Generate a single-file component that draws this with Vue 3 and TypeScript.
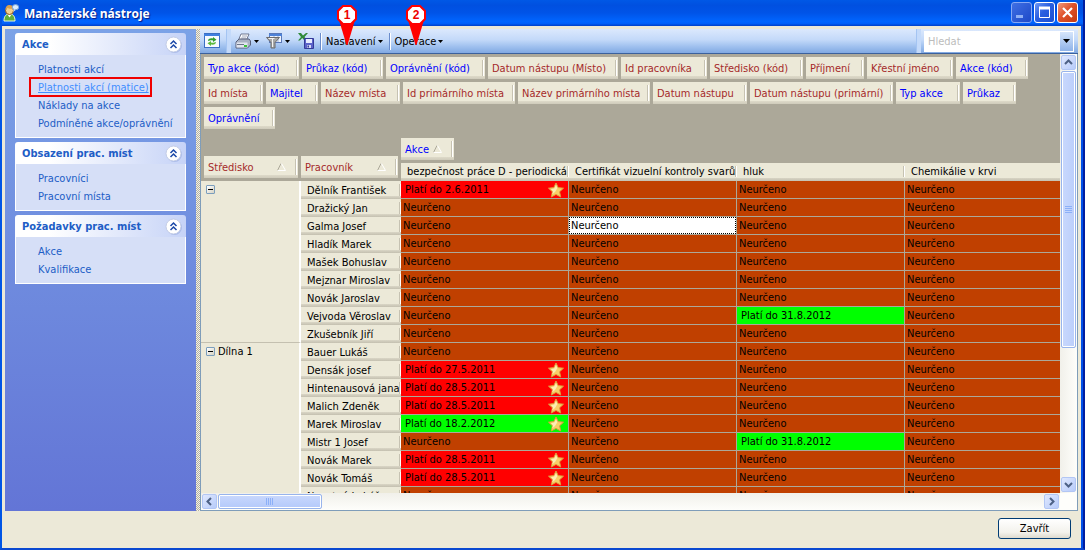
<script setup lang="ts">
import { ref } from 'vue'

interface Panel { title: string; links: string[] }
interface Field { label: string; width: number; data?: boolean }
interface Cell { text: string; kind: 'none' | 'bad' | 'ok'; star: boolean }
interface Person { name: string; cells: Cell[] }
interface Group { label: string; people: Person[] }

const panels: Panel[] = [
  { title: 'Akce', links: ['Platnosti akcí', 'Platnosti akcí (matice)', 'Náklady na akce', 'Podmíněné akce/oprávnění'] },
  { title: 'Obsazení prac. míst', links: ['Pracovníci', 'Pracovní místa'] },
  { title: 'Požadavky prac. míst', links: ['Akce', 'Kvalifikace'] },
]
const activeLink = ref('Platnosti akcí (matice)')

const fields: Field[] = [
  { label: 'Typ akce (kód)', width: 95, data: true },
  { label: 'Průkaz (kód)', width: 81, data: true },
  { label: 'Oprávnění (kód)', width: 99, data: true },
  { label: 'Datum nástupu (Místo)', width: 130 },
  { label: 'Id pracovníka', width: 86 },
  { label: 'Středisko (kód)', width: 93 },
  { label: 'Příjmení', width: 58 },
  { label: 'Křestní jméno', width: 86 },
  { label: 'Akce (kód)', width: 72, data: true },
  { label: 'Id místa', width: 59 },
  { label: 'Majitel', width: 52, data: true },
  { label: 'Název místa', width: 79 },
  { label: 'Id primárního místa', width: 112 },
  { label: 'Název primárního místa', width: 132 },
  { label: 'Datum nástupu', width: 94 },
  { label: 'Datum nástupu (primární)', width: 143 },
  { label: 'Typ akce', width: 64, data: true },
  { label: 'Průkaz', width: 53, data: true },
  { label: 'Oprávnění', width: 71, data: true },
]

const columns = ['bezpečnost práce D - periodická', 'Certifikát vizuelní kontroly svarů', 'hluk', 'Chemikálie v krvi']

const none = (): Cell => ({ text: 'Neurčeno', kind: 'none', star: false })
const until = (date: string, kind: 'bad' | 'ok', star: boolean): Cell => ({ text: `Platí do ${date}`, kind, star })
const person = (name: string, first?: Cell, third?: Cell): Person => ({
  name,
  cells: [first ?? none(), none(), third ?? none(), none()],
})

const groups: Group[] = [
  {
    label: '',
    people: [
      person('Dělník František', until('2.6.2011', 'bad', true)),
      person('Dražický Jan'),
      person('Galma Josef'),
      person('Hladík Marek'),
      person('Mašek Bohuslav'),
      person('Mejznar Miroslav'),
      person('Novák Jaroslav'),
      person('Vejvoda Věroslav', undefined, until('31.8.2012', 'ok', false)),
      person('Zkušebník Jiří'),
    ],
  },
  {
    label: 'Dílna 1',
    people: [
      person('Bauer Lukáš'),
      person('Densák josef', until('27.5.2011', 'bad', true)),
      person('Hintenausová jana', until('28.5.2011', 'bad', true)),
      person('Malich Zdeněk', until('28.5.2011', 'bad', true)),
      person('Marek Miroslav', until('18.2.2012', 'ok', true)),
      person('Mistr 1 Josef', undefined, until('31.8.2012', 'ok', false)),
      person('Novák Marek', until('28.5.2011', 'bad', true)),
      person('Novák Tomáš', until('28.5.2011', 'bad', true)),
      person('Novotný Lukáš'),
    ],
  },
]

const selected = ref('Galma Josef/1')
const search = ref('')
</script>

<template>
  <div class="window">
    <header class="titlebar">
      <svg class="app-icon" viewBox="0 0 16 18" width="16" height="18" aria-hidden="true">
        <path d="M1 17c0-5 2-7 5.500-7s5.500 2 5.500 7z" fill="#5fae3a" stroke="#e8f5d8" />
        <path d="M4.500 10.500l2 3 2-3z" fill="#fff" />
        <circle cx="6.500" cy="6.500" r="4" fill="#f3cf8e" stroke="#8a5a1c" />
        <path d="M2.500 6c0-4 2-5 4-5s4 1 4 3.500c-3 .5-5 0-6-.5z" fill="#d9a050" />
        <ellipse cx="12.500" cy="3.200" rx="3.200" ry="2.600" fill="#d9ecff" stroke="#6f9fd6" />
        <path d="M11 5l-1 3 2.500-2z" fill="#d9ecff" />
      </svg>
      <h1>Manažerské nástroje</h1>
      <div class="window-buttons">
        <button class="wb dim" aria-label="Minimalizovat">
          <svg viewBox="0 0 19 19" width="19" height="19"><rect x="4" y="12" width="7" height="3" fill="#8fb0f5" /></svg>
        </button>
        <button class="wb" aria-label="Maximalizovat">
          <svg viewBox="0 0 19 19" width="19" height="19"><path d="M4.500 4.500h10v10h-10z" fill="none" stroke="#fff" /><path d="M4 5h11" stroke="#fff" stroke-width="3" /></svg>
        </button>
        <button class="wb close" aria-label="Zavřít okno">
          <svg viewBox="0 0 19 19" width="19" height="19"><path d="M5 5l9 9M14 5l-9 9" stroke="#fff" stroke-width="2.200" /></svg>
        </button>
      </div>
    </header>

    <div class="body">
      <nav class="sidebar">
        <section v-for="p in panels" :key="p.title" class="panel">
          <h2>
            <span>{{ p.title }}</span>
            <button class="collapse" :aria-label="`Sbalit ${p.title}`">
              <svg viewBox="0 0 17 17" width="17" height="17">
                <circle cx="9.500" cy="9.500" r="7.500" fill="#a9bbea" />
                <circle cx="8.500" cy="8.500" r="7.500" fill="#fff" stroke="#c3cce6" />
                <path d="M5.500 8l3-3 3 3M5.500 12l3-3 3 3" fill="none" stroke="#1a48a8" stroke-width="1.500" />
              </svg>
            </button>
          </h2>
          <ul>
            <li v-for="l in p.links" :key="l">
              <a href="#" :class="{ active: l === activeLink }" @click.prevent="activeLink = l">{{ l }}</a>
            </li>
          </ul>
        </section>
      </nav>
      <div class="splitter"></div>

      <main class="main">
        <div class="toolbar">
          <button class="tool refresh" aria-label="Obnovit">
            <svg viewBox="0 0 16 16" width="16" height="16">
              <rect x="0.500" y="0.500" width="15" height="14" fill="#f6faff" stroke="#3b6fc4" />
              <path d="M0 1h16v2H0z" fill="#3f7fe0" />
              <path d="M4 8c0-2 2-3 5-2.500V4l3.500 2.700L9 9V7.500C7 7 6 7.500 4 8z" fill="#2f9e2f" />
              <path d="M12 9c0 2-2 3-5 2.500V13l-3.500-2.700L7 8v1.500c2 .5 3 0 5-.5z" fill="#5cba3c" />
            </svg>
          </button>
          <span class="grip"></span>
          <button class="tool print" aria-label="Tisk">
            <svg viewBox="0 0 16 16" width="16" height="16">
              <path d="M6 1h8l-2.500 6H3.500z" fill="#fff" stroke="#6d7690" />
              <path d="M7 3h5M6.200 5h5" stroke="#a0a8bc" />
              <path d="M1 9l3-3h10l1.500 2v4l-3 3H1z" fill="#aab2c4" stroke="#565f78" />
              <path d="M1.500 9.500h11v5h-11z" fill="#e2e6ef" />
              <path d="M2 11.500h7" stroke="#6b748a" /><path d="M9 12h3v2H9z" fill="#3cc43c" />
            </svg>
            <svg class="caret" viewBox="0 0 5 3" width="5" height="3"><path d="M0 0h5L2.500 3z" /></svg>
          </button>
          <button class="tool filter" aria-label="Filtr">
            <svg viewBox="0 0 16 16" width="16" height="16">
              <rect x="3.500" y="0.500" width="12" height="9" fill="#eef4ff" stroke="#5a78b8" />
              <path d="M3 1h13v2H3z" fill="#4d82d8" /><path d="M8 3v6M12 3v6" stroke="#9fb3d8" />
              <path d="M0.500 4.500h13L9 9.500V15H5V9.500z" fill="#a8a8a8" stroke="#6c6c6c" />
              <path d="M6.500 6v8M2.500 5.500h6" stroke="#f4f4f4" />
            </svg>
            <svg class="caret" viewBox="0 0 5 3" width="5" height="3"><path d="M0 0h5L2.500 3z" /></svg>
          </button>
          <button class="tool excel" aria-label="Uložit do Excelu">
            <svg viewBox="0 0 16 16" width="16" height="16">
              <path d="M0 0h3l2 2.500L8 0h2L6.500 4 9 7H6L4.200 5 2 7.500H0L3 4z" fill="#2f8a3a" />
              <path d="M6.500 5.500h9v10h-9z" fill="#5b62c8" stroke="#343a98" />
              <path d="M8 6h6v4H8z" fill="#e8ecff" /><path d="M9 12h4v3H9z" fill="#d5d9f5" /><path d="M9.500 12.500h1.500v2H9.500z" fill="#343a98" />
            </svg>
          </button>
          <span class="sep"></span>
          <button class="tool menu">
            Nastavení
            <svg class="caret" viewBox="0 0 5 3" width="5" height="3"><path d="M0 0h5L2.500 3z" /></svg>
            <svg class="pin" viewBox="0 0 20 40" width="20" height="40">
              <path d="M2 15h16L10.500 40h-1z" fill="#f00" />
              <path d="M6 1h8l5 5v8l-5 5H6l-5-5V6z" fill="#fff" stroke="#f00" stroke-width="2" />
              <text x="10" y="14" text-anchor="middle">1</text>
            </svg>
          </button>
          <span class="sep"></span>
          <button class="tool menu">
            Operace
            <svg class="caret" viewBox="0 0 5 3" width="5" height="3"><path d="M0 0h5L2.500 3z" /></svg>
            <svg class="pin" viewBox="0 0 20 40" width="20" height="40">
              <path d="M2 15h16L10.500 40h-1z" fill="#f00" />
              <path d="M6 1h8l5 5v8l-5 5H6l-5-5V6z" fill="#fff" stroke="#f00" stroke-width="2" />
              <text x="10" y="14" text-anchor="middle">2</text>
            </svg>
          </button>
          <span class="spacer"></span>
          <span class="grip"></span>
          <div class="search">
            <input v-model="search" type="text" placeholder="Hledat" aria-label="Hledat" />
            <button aria-label="Historie hledání">
              <svg viewBox="0 0 7 4" width="7" height="4"><path d="M0 0h7L3.500 4z" /></svg>
            </button>
          </div>
        </div>

        <div class="grid-frame">
          <div class="pivot">
            <div class="fields">
              <button v-for="f in fields" :key="f.label" class="chip" :class="{ data: f.data }" :style="{ width: f.width + 'px' }">{{ f.label }}</button>
            </div>
            <table>
              <colgroup>
                <col class="c-area" /><col class="c-area" />
                <col class="c-val" /><col class="c-val" /><col class="c-val" /><col />
              </colgroup>
              <thead>
                <tr class="area-row">
                  <th rowspan="2" class="low">
                    <button class="chip sorted row-field">Středisko
                      <svg viewBox="0 0 9 8" width="9" height="8"><path d="M0.500 7.500L4 0.500" stroke="#aca899" fill="none" /><path d="M4.500 0.500l4 7h-8" stroke="#fff" fill="none" /></svg>
                    </button>
                  </th>
                  <th rowspan="2" class="low">
                    <button class="chip sorted row-field">Pracovník
                      <svg viewBox="0 0 9 8" width="9" height="8"><path d="M0.500 7.500L4 0.500" stroke="#aca899" fill="none" /><path d="M4.500 0.500l4 7h-8" stroke="#fff" fill="none" /></svg>
                    </button>
                  </th>
                  <th colspan="4" class="high">
                    <button class="chip data sorted">Akce
                      <svg viewBox="0 0 9 8" width="9" height="8"><path d="M0.500 7.500L4 0.500" stroke="#aca899" fill="none" /><path d="M4.500 0.500l4 7h-8" stroke="#fff" fill="none" /></svg>
                    </button>
                  </th>
                </tr>
                <tr>
                  <th v-for="c in columns" :key="c" class="caption">{{ c }}</th>
                </tr>
              </thead>
              <tbody v-for="g in groups" :key="g.label">
                <tr v-for="(p, i) in g.people" :key="p.name">
                  <th v-if="i === 0" :rowspan="g.people.length" class="group">
                    <button class="expander" aria-label="Sbalit skupinu"></button>{{ g.label }}
                  </th>
                  <th class="name">{{ p.name }}</th>
                  <td
                    v-for="(c, k) in p.cells" :key="k"
                    :class="[c.kind, { selected: selected === p.name + '/' + k }]"
                    @click="selected = p.name + '/' + k"
                  >
                    <div class="cell">
                      <span>{{ c.text }}</span>
                      <svg v-if="c.star" viewBox="0 0 16 16" width="16" height="16">
                        <path d="M8 1l2.200 4.600 5.300.6-3.900 3.600 1.100 5.200L8 12.400 3.300 15l1.100-5.200L.5 6.200l5.300-.6z" fill="#f8cf68" stroke="#dc9a3c" />
                        <path d="M8 3l1.300 3.200L7 10 4 12.500 5 9.500 3 7l3.300-.6z" fill="#fdeeb4" />
                      </svg>
                    </div>
                  </td>
                </tr>
              </tbody>
            </table>
          </div>

          <div class="vscroll">
            <button class="sb" aria-label="Nahoru"><svg viewBox="0 0 9 9" width="9" height="9"><path d="M1 6l3.500-3.500L8 6" /></svg></button>
            <div class="thumb"><i></i><i></i><i></i><i></i></div>
            <div class="rest"></div>
            <button class="sb" aria-label="Dolů"><svg viewBox="0 0 9 9" width="9" height="9"><path d="M1 3l3.500 3.500L8 3" /></svg></button>
          </div>
          <div class="hscroll">
            <button class="sb" aria-label="Vlevo"><svg viewBox="0 0 9 9" width="9" height="9"><path d="M6 1L2.500 4.500 6 8" /></svg></button>
            <div class="thumb"><i></i><i></i><i></i><i></i></div>
            <div class="rest"></div>
            <button class="sb" aria-label="Vpravo"><svg viewBox="0 0 9 9" width="9" height="9"><path d="M3 1l3.500 3.500L3 8" /></svg></button>
          </div>
          <div class="corner"></div>
        </div>
      </main>
    </div>

    <footer class="footer"><button class="close-button">Zavřít</button></footer>
  </div>
</template>

<style>
html, body, #app { height: 100%; }
body { margin: 0; background: #001a80; }
</style>

<style scoped>
* { box-sizing: border-box; }
button, input { font: inherit; color: inherit; border: 0; padding: 0; margin: 0; background: none; border-radius: 0; outline: 0; }
button { display: flex; align-items: center; justify-content: center; white-space: nowrap; }
svg { display: block; flex: none; }

.window {
  display: flex; flex-direction: column; height: 100vh; overflow: hidden;
  background: #ece9d8; color: #000;
  border-left: 2px solid #0055e5; border-bottom: 2px solid #0a48d0; border-right: 2px solid #001ea0;
  font: 11px/13px "DejaVu Sans Condensed", Roboto, sans-serif;
}

/* title bar */
.titlebar {
  display: flex; align-items: center; flex: none; height: 26px; padding: 0 5px 2px 1px; gap: 5px;
  background: linear-gradient(#0058e6, #0050e0 20%, #0054e8 50%, #0065ff 82%, #0060fa 90%, #0040c8);
}
.titlebar h1 {
  margin: 0; flex: 1; font: bold 12px/20px "Open Sans", sans-serif; color: #fff; text-shadow: 1px 1px 1px #0a1883;
  padding-top: 3px; white-space: nowrap;
}
.app-icon { margin-top: 2px; }
.window-buttons { display: flex; gap: 2px; }
.wb { width: 21px; height: 21px; border: 1px solid #fff; border-radius: 3px; background: linear-gradient(135deg, #6d97f5, #2a5fe0 45%, #1b4fd2); }
.wb.dim { border-color: #86a8f4; background: linear-gradient(135deg, #3f6fe4, #1d49c8); }
.wb.close { background: linear-gradient(135deg, #f0997c, #e0522a 45%, #c23a12); }

.body { display: flex; flex: 1; min-height: 0; padding: 3px 3px 0 3px; border-right: 2px solid #0050e8; }

/* sidebar */
.sidebar { flex: none; width: 191px; padding: 4px 10px; display: flex; flex-direction: column; gap: 4px; background: linear-gradient(#7ba2e7, #6375d6); }
.panel h2 {
  display: flex; align-items: center; justify-content: space-between; margin: 0; height: 22px; padding: 0 4px 0 7px;
  border-radius: 3px 3px 0 0; background: linear-gradient(90deg, #fff 20%, #c6d3f7);
  font: bold 11px/22px "DejaVu Sans Condensed", sans-serif; color: #215dc6; white-space: nowrap;
}
.panel h2 span { padding-top: 1px; }
.panel ul { margin: 0; padding: 6px 0 4px 22px; list-style: none; background: #d6dff7; border: 1px solid #fff; border-top: 0; }
.panel li { height: 18px; line-height: 18px; white-space: nowrap; }
.panel a { color: #215dc6; text-decoration: none; }
.panel a.active { position: relative; display: inline-block; color: #428eff; text-decoration: underline; }
.panel a.active::after { content: ""; position: absolute; inset: -2px -3px 0 -9px; border: 2px solid #f00000; }
.splitter {
  flex: none; width: 4px;
  background: repeating-conic-gradient(#b4b0a0 0 25%, #f4f2e8 0 50%) 0 0 / 2px 2px;
}

/* toolbar */
.main { flex: 1; min-width: 0; display: flex; flex-direction: column; }
.toolbar { display: flex; align-items: center; flex: none; height: 25px; padding: 0 4px; background: linear-gradient(#dce9fd, #c3d9f9 45%, #9dbfee 75%, #81a9e2); border-bottom: 1px solid #3b619c; }
.tool { height: 22px; gap: 3px; flex: none; }
.grip { width: 5px; height: 24px; background: #c4dafa; margin: 0 4px 0 6px; flex: none; border-left: 1px solid #a4c4f2; }
.spacer + .grip { margin: 0 3px; }
.tool.filter { margin-left: 7px; }
.tool.excel { margin-left: 8px; }
.sep { width: 2px; height: 17px; margin: 0 4px 0 6px; background: linear-gradient(90deg, #6a8ccb 50%, #fff 50%); flex: none; }
.menu { position: relative; gap: 2px; }
.pin { position: absolute; left: 11px; top: -25px; z-index: 2; }
.pin text { font: bold 12px "Liberation Sans", sans-serif; fill: #e00; }
.spacer { flex: 1; }
.search { display: flex; width: 150px; height: 21px; background: #fff; padding: 1px; }
.search input { flex: 1; min-width: 0; padding: 0 3px; }
.search input::placeholder { color: #bcbcbc; opacity: 1; }
.search button { width: 13px; background: linear-gradient(#d6e5fb, #8fb3e8); }

/* pivot grid */
.grid-frame {
  flex: 1; min-height: 0; display: grid; grid-template-columns: minmax(0, 1fr) 17px; grid-template-rows: minmax(0, 1fr) 17px;
  border: 1px solid #7f9db9; border-top: 0;
}
.pivot { overflow: hidden; background: #aca899; }
.fields { display: flex; flex-wrap: wrap; gap: 3px; padding: 3px 3px 6px; }
.chip {
  position: relative; height: 22px; padding: 0 4px; justify-content: flex-start; color: #a52a2a;
  background: linear-gradient(#ece9d8 19px, #dedac9 19px, #cfcbbb); font-weight: normal;
}
.chip::after, .caption::after, .name::after {
  content: ""; position: absolute; right: 1px; top: 3px; bottom: 3px; width: 2px;
  background: linear-gradient(90deg, #c6c2b2 50%, #fff 50%);
}
.chip.data { color: #0000ff; }
.chip.sorted { gap: 4px; padding-right: 12px; }
.chip.row-field { width: calc(100% - 3px); justify-content: space-between; }
table { width: 100%; table-layout: fixed; border-collapse: separate; border-spacing: 0; }
.c-area { width: 100px; }
.c-val { width: 168px; }
th, td { padding: 0; font-weight: normal; text-align: left; white-space: nowrap; overflow: hidden; }
.area-row { height: 28px; }
.low { vertical-align: bottom; padding: 0 0 3px 3px; }
.low + .low { padding-left: 0; }
.low + .low .chip { width: 97px; }
.high { vertical-align: top; padding-top: 3px; }
.caption { position: relative; height: 18px; line-height: 18px; padding-left: 6px; vertical-align: top; background: linear-gradient(#ece9d8 15px, #d8d4c4 15px, #c4c0b0); }
.caption::after { right: 0; top: 3px; bottom: 4px; }
.caption:last-child::after { display: none; }
.group { vertical-align: top; height: 18px; line-height: 18px; padding-left: 5px; background: #ece9d8; border-bottom: 1px solid #c4c0b0; border-right: 2px solid #fff; }
.expander { display: inline-block; position: relative; width: 9px; height: 9px; margin-right: 3px; border: 1px solid #7b9ebd; border-radius: 1px; background: linear-gradient(135deg, #fff, #d6d2c2); }
.expander::after { content: ""; position: absolute; left: 1px; right: 1px; top: 3px; height: 1px; background: #000; }
.name { position: relative; height: 18px; line-height: 17px; padding-left: 6px; background: linear-gradient(#ece9d8 15px, #dad6c6 15px, #c4c0b0); }
.name::after { right: 0; }
td { height: 18px; border-bottom: 1px solid #aca899; border-right: 1px solid #aca899; background: #c04000; }
td:last-child { border-right: 0; }
.cell { display: flex; justify-content: space-between; height: 17px; line-height: 17px; padding: 0 4px 0 2px; }
td.bad { background: #ff0000; }
td.ok { background: #00ff00; }
.bad .cell, .ok .cell { padding-left: 4px; }
.cell svg { margin-top: 1px; }
td.selected { background: #fff; }
td.selected .cell { border: 1px dotted #000; line-height: 15px; padding-left: 1px; }

/* scroll bars */
.vscroll, .hscroll { display: flex; padding: 1px; gap: 1px; }
.vscroll { flex-direction: column; background: linear-gradient(90deg, #f1f0ea, #fefefb); }
.hscroll { background: linear-gradient(#f1f0ea, #fefefb); }
.sb { flex: none; width: 15px; height: 15px; border: 1px solid #b2c6f4; border-radius: 2px; background: linear-gradient(135deg, #dfe8fe, #b7cbfa); }
.sb path { fill: none; stroke: #4d6185; stroke-width: 2; }
.thumb { display: flex; align-items: center; justify-content: center; gap: 1px; border: 1px solid #98b4ec; border-radius: 2px; box-shadow: inset 0 0 0 1px #fff; }
.thumb i { background: #8cb0f8; }
.vscroll .thumb { flex: 277 0 0; flex-direction: column; background: linear-gradient(90deg, #c9d8fd, #bbcefb); }
.vscroll i { width: 7px; height: 1px; }
.vscroll .rest { flex: 128 0 0; }
.hscroll .thumb { flex: 102 0 0; background: linear-gradient(#c9d8fd, #b4c9fa); }
.hscroll i { width: 1px; height: 7px; }
.hscroll .rest { flex: 722 0 0; }
.corner { background: #fefefb; }

.footer { flex: none; height: 37px; padding: 7px 10px 0; display: flex; justify-content: flex-end; border-right: 2px solid #0050e8; }
.close-button { width: 73px; height: 21px; border: 1px solid #003c74; border-radius: 3px; background: linear-gradient(#fff, #f3f2ec 70%, #dedace); }
</style>
